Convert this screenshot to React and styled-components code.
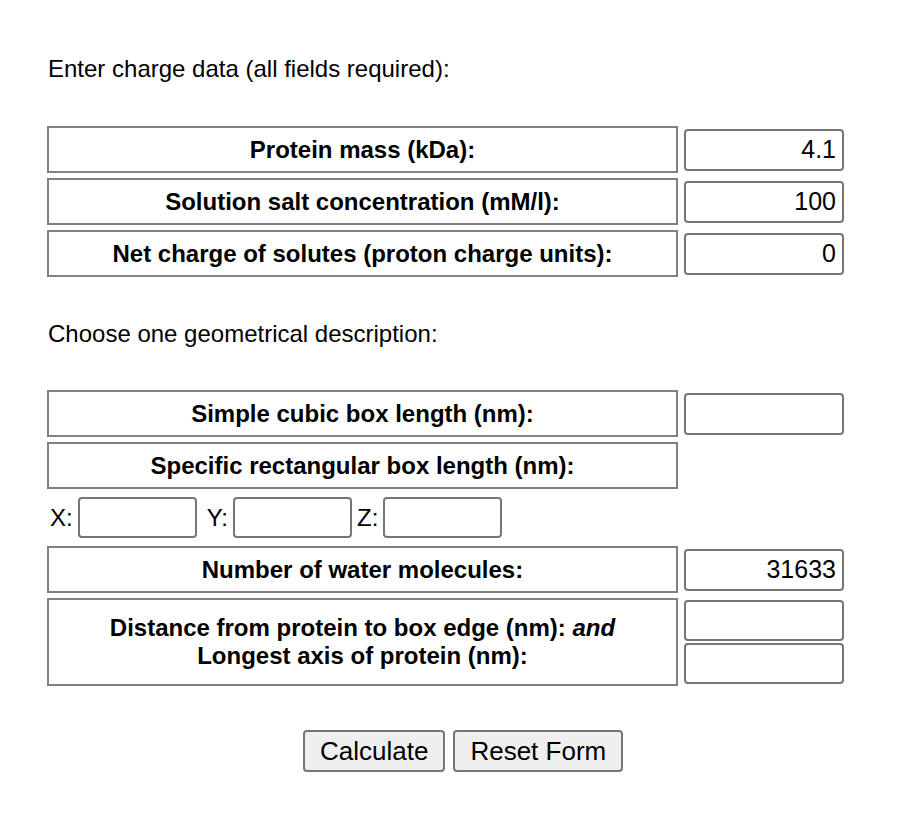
import React, { useState } from "react";
import styled, { createGlobalStyle } from "styled-components";

const GlobalStyle = createGlobalStyle`
  body {
    margin: 0;
    background: #ffffff;
    font-family: "Liberation Sans", Arial, sans-serif;
    color: #000000;
  }
`;

export default function App() {
  const [mass, setMass] = useState("4.1");
  const [salt, setSalt] = useState("100");
  const [charge, setCharge] = useState("0");
  const [water, setWater] = useState("31633");

  return (
    <>
      <GlobalStyle />
      <Page>
        <Heading>Enter charge data (all fields required):</Heading>

        <FormGrid $top={43}>
          <LabelCell>Protein mass (kDa):</LabelCell>
          <InputCell>
            <ValueInput value={mass} onChange={(e) => setMass(e.target.value)} />
          </InputCell>

          <LabelCell>Solution salt concentration (mM/l):</LabelCell>
          <InputCell>
            <ValueInput value={salt} onChange={(e) => setSalt(e.target.value)} />
          </InputCell>

          <LabelCell>Net charge of solutes (proton charge units):</LabelCell>
          <InputCell>
            <ValueInput
              value={charge}
              onChange={(e) => setCharge(e.target.value)}
            />
          </InputCell>
        </FormGrid>

        <Heading $top={43}>Choose one geometrical description:</Heading>

        <FormGrid $top={42}>
          <LabelCell>Simple cubic box length (nm):</LabelCell>
          <InputCell>
            <ValueInput />
          </InputCell>

          <LabelCell>Specific rectangular box length (nm):</LabelCell>
          <InputCell />

          <AxisRow>
            <AxisLabel>X:</AxisLabel>
            <AxisInput />
            <AxisLabel $lead={10}>Y:</AxisLabel>
            <AxisInput />
            <AxisLabel $lead={5}>Z:</AxisLabel>
            <AxisInput />
          </AxisRow>

          <LabelCell>Number of water molecules:</LabelCell>
          <InputCell>
            <ValueInput value={water} onChange={(e) => setWater(e.target.value)} />
          </InputCell>

          <LabelCell $tall>
            <span>
              Distance from protein to box edge (nm): <em>and</em>
            </span>
            <span>Longest axis of protein (nm):</span>
          </LabelCell>
          <StackCell>
            <ValueInput $h={41} />
            <ValueInput $h={41} />
          </StackCell>
        </FormGrid>

        <ButtonRow>
          <FormButton type="button">Calculate</FormButton>
          <FormButton
            type="reset"
            onClick={() => {
              setMass("");
              setSalt("");
              setCharge("");
              setWater("");
            }}
          >
            Reset Form
          </FormButton>
        </ButtonRow>
      </Page>
    </>
  );
}

const Page = styled.div`
  width: 908px;
  padding: 55px 0 60px 47px;
  box-sizing: border-box;
`;

const Heading = styled.p`
  margin: ${(p) => p.$top || 0}px 0 0 1px;
  font-size: 24px;
  line-height: 28px;
`;

const FormGrid = styled.div`
  display: grid;
  grid-template-columns: 631px 160px;
  column-gap: 6px;
  row-gap: 5px;
  margin-top: ${(p) => p.$top}px;
`;

const LabelCell = styled.div`
  height: ${(p) => (p.$tall ? 88 : 47)}px;
  box-sizing: border-box;
  border: 2px solid #808080;
  display: flex;
  flex-direction: column;
  align-items: center;
  justify-content: center;
  font-size: 24px;
  line-height: 28px;
  font-weight: bold;
  text-align: center;

  em {
    font-style: italic;
  }
`;

const InputCell = styled.div`
  display: flex;
  align-items: center;
`;

const StackCell = styled.div`
  display: flex;
  flex-direction: column;
  justify-content: center;
  gap: 2px;
`;

const ValueInput = styled.input`
  width: 160px;
  height: ${(p) => p.$h || 42}px;
  box-sizing: border-box;
  border: 2px solid #767676;
  border-radius: 4px;
  padding: 0 6px;
  font-family: "Liberation Sans", Arial, sans-serif;
  font-size: 25px;
  text-align: right;
  color: #000000;
  background: #ffffff;
  outline: none;
`;

const AxisRow = styled.div`
  grid-column: 1 / -1;
  height: 47px;
  display: flex;
  align-items: center;
  padding-left: 3px;
`;

const AxisLabel = styled.span`
  font-size: 24px;
  margin-left: ${(p) => p.$lead || 0}px;
  margin-right: 5px;
`;

const AxisInput = styled.input`
  width: 119px;
  height: 41px;
  box-sizing: border-box;
  border: 2px solid #767676;
  border-radius: 4px;
  font-family: "Liberation Sans", Arial, sans-serif;
  font-size: 24px;
  background: #ffffff;
  outline: none;
`;

const ButtonRow = styled.div`
  display: flex;
  gap: 8px;
  margin-top: 44px;
  padding-left: 256px;
`;

const FormButton = styled.button`
  height: 42px;
  box-sizing: border-box;
  padding: 0 15px;
  border: 2px solid #767676;
  border-radius: 4px;
  background: #efefef;
  font-family: "Liberation Sans", Arial, sans-serif;
  font-size: 26px;
  color: #000000;
`;
